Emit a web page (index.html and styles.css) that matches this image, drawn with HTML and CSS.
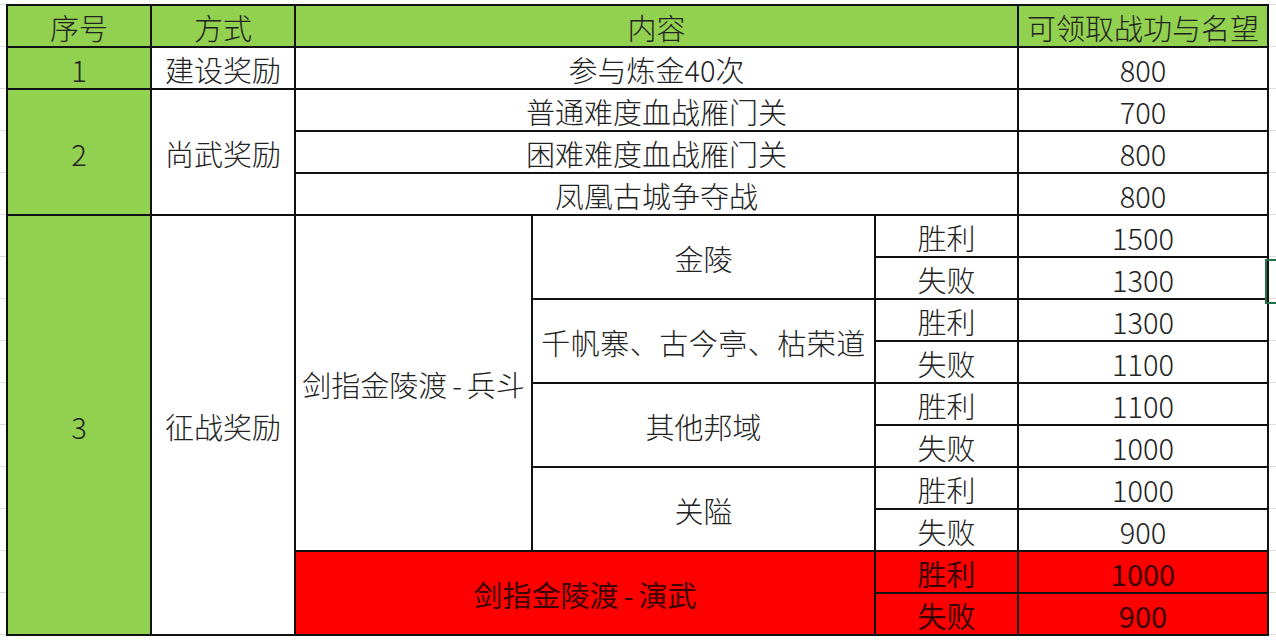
FILE: index.html
```html
<!DOCTYPE html>
<html lang="zh-CN">
<head>
<meta charset="utf-8">
<title>奖励表</title>
<link rel="stylesheet" href="styles.css">
</head>
<body>
<div class="sheet">
<table class="grid">
  <colgroup>
    <col class="c1"><col class="c2"><col class="c3"><col class="c4"><col class="c5"><col class="c6">
  </colgroup>
  <tr class="head">
    <td>序号</td><td>方式</td><td colspan="3">内容</td><td>可领取战功与名望</td>
  </tr>
  <tr>
    <td class="g">1</td><td>建设奖励</td><td colspan="3">参与炼金40次</td><td>800</td>
  </tr>
  <tr>
    <td class="g" rowspan="3">2</td><td rowspan="3">尚武奖励</td><td colspan="3">普通难度血战雁门关</td><td>700</td>
  </tr>
  <tr><td colspan="3">困难难度血战雁门关</td><td>800</td></tr>
  <tr><td colspan="3">凤凰古城争夺战</td><td>800</td></tr>
  <tr>
    <td class="g" rowspan="10">3</td><td rowspan="10">征战奖励</td>
    <td rowspan="8">剑指金陵渡<span class="dash">-</span>兵斗</td><td rowspan="2">金陵</td><td>胜利</td><td>1500</td>
  </tr>
  <tr><td>失败</td><td>1300</td></tr>
  <tr><td rowspan="2" class="tight">千帆寨、古今亭、枯荣道</td><td>胜利</td><td>1300</td></tr>
  <tr><td>失败</td><td>1100</td></tr>
  <tr><td rowspan="2">其他邦域</td><td>胜利</td><td>1100</td></tr>
  <tr><td>失败</td><td>1000</td></tr>
  <tr><td rowspan="2">关隘</td><td>胜利</td><td>1000</td></tr>
  <tr><td>失败</td><td>900</td></tr>
  <tr><td class="r" colspan="2" rowspan="2">剑指金陵渡<span class="dash">-</span>演武</td><td class="r">胜利</td><td class="r">1000</td></tr>
  <tr><td class="r">失败</td><td class="r">900</td></tr>
</table>
<div class="select"></div>
</div>
</body>
</html>
```

FILE: styles.css
```css
html, body {
  margin: 0;
  padding: 0;
  background: #ffffff;
}
body {
  width: 1276px;
  height: 642px;
  overflow: hidden;
  background-image: linear-gradient(#dddddd 1px, transparent 1px);
  background-size: 100% 42px;
  background-position: 0 4px;
}
.sheet {
  position: relative;
  width: 1276px;
  height: 642px;
}
.grid {
  border-collapse: collapse;
  table-layout: fixed;
  width: 1261px;
  margin: 4px 0 0 6px;
  font-family: "Noto Sans CJK SC", "Noto Sans", sans-serif;
  font-size: 29px;
  font-weight: 300;
  color: #222222;
  background: #ffffff;
}
.c1 { width: 144px; }
.c2 { width: 144px; }
.c3 { width: 237px; }
.c4 { width: 343px; }
.c5 { width: 143px; }
.c6 { width: 250px; }
.grid tr { height: 42px; }
.grid td {
  border: 2px solid #111111;
  padding: 0;
  text-align: center;
  vertical-align: middle;
  line-height: 38px;
  padding-top: 1px;
  white-space: nowrap;
  overflow: hidden;
}
.head td,
.grid td.g {
  background: #92d050;
}
.grid td.r {
  background: #ff0000;
  color: #3c0000;
  font-weight: 400;
}
.grid td.tight {
  letter-spacing: 0.5px;
}
.dash {
  margin: 0 5px;
}
.select {
  position: absolute;
  left: 1265px;
  top: 255px;
  width: 14px;
  height: 41px;
  border: 2px solid #217346;
  border-right: none;
}
```
